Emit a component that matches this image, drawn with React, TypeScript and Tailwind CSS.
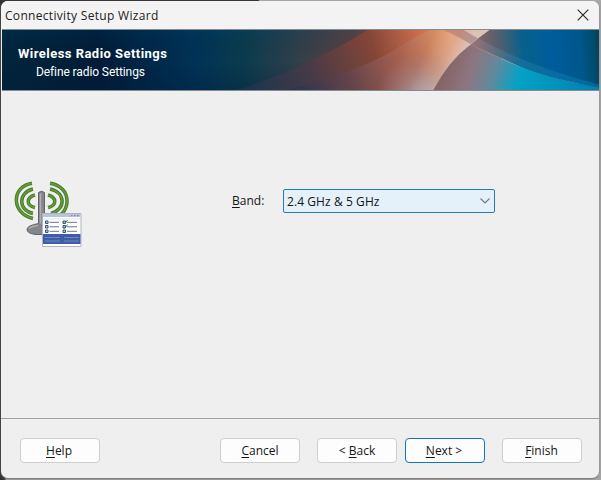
import type { ReactNode } from 'react';

const uiFont = "font-['Open_Sans','Noto_Sans',sans-serif]";

function BannerArt() {
  return (
    <svg className="absolute inset-0 h-full w-full" viewBox="2 29.5 596 61" preserveAspectRatio="none" aria-hidden="true">
      <defs>
        <linearGradient id="base" gradientUnits="userSpaceOnUse" x1="2" y1="0" x2="440" y2="0">
          <stop offset="0" stopColor="#01263c" />
          <stop offset=".22" stopColor="#011c38" />
          <stop offset=".44" stopColor="#003357" />
          <stop offset=".55" stopColor="#0a3c4e" />
          <stop offset=".67" stopColor="#30404a" />
          <stop offset=".8" stopColor="#5f4240" />
          <stop offset=".9" stopColor="#a3523f" />
          <stop offset="1" stopColor="#dc8055" />
        </linearGradient>
        <linearGradient id="shade" x1="0" y1="0" x2="0" y2="1">
          <stop offset="0" stopColor="#00406a" stopOpacity=".2" />
          <stop offset=".5" stopColor="#001830" stopOpacity="0" />
          <stop offset="1" stopColor="#001838" stopOpacity=".3" />
        </linearGradient>
        <linearGradient id="red" gradientUnits="userSpaceOnUse" x1="240" y1="90" x2="430" y2="30">
          <stop offset="0" stopColor="#16334f" />
          <stop offset=".35" stopColor="#453a47" />
          <stop offset=".7" stopColor="#854637" />
          <stop offset="1" stopColor="#dc7752" />
        </linearGradient>
        <linearGradient id="mauve" gradientUnits="userSpaceOnUse" x1="290" y1="90" x2="450" y2="35">
          <stop offset="0" stopColor="#26344a" />
          <stop offset=".35" stopColor="#64434a" />
          <stop offset=".68" stopColor="#a8614f" />
          <stop offset="1" stopColor="#e49a6d" />
        </linearGradient>
        <radialGradient id="haze" gradientUnits="userSpaceOnUse" cx="422" cy="98" r="46">
          <stop offset="0" stopColor="#9caabb" stopOpacity=".9" />
          <stop offset=".35" stopColor="#a19ba8" stopOpacity=".6" />
          <stop offset="1" stopColor="#a08088" stopOpacity="0" />
        </radialGradient>
        <linearGradient id="blue" gradientUnits="userSpaceOnUse" x1="470" y1="44" x2="598" y2="34">
          <stop offset="0" stopColor="#8d6967" />
          <stop offset=".2" stopColor="#5a5f6b" />
          <stop offset=".4" stopColor="#07618c" />
          <stop offset=".62" stopColor="#005c9b" />
          <stop offset=".85" stopColor="#00578b" />
          <stop offset="1" stopColor="#00445c" />
        </linearGradient>
        <linearGradient id="cyan" gradientUnits="userSpaceOnUse" x1="440" y1="62" x2="590" y2="110">
          <stop offset="0" stopColor="#84605f" />
          <stop offset=".2" stopColor="#8d7681" />
          <stop offset=".34" stopColor="#63899c" />
          <stop offset=".5" stopColor="#05a2c4" />
          <stop offset="1" stopColor="#0080b2" />
        </linearGradient>
        <linearGradient id="band" gradientUnits="userSpaceOnUse" x1="443" y1="30" x2="598" y2="88">
          <stop offset="0" stopColor="#bd7966" />
          <stop offset=".22" stopColor="#947781" />
          <stop offset=".5" stopColor="#1b75a0" />
          <stop offset="1" stopColor="#0079b0" />
        </linearGradient>
        <linearGradient id="glow" gradientUnits="userSpaceOnUse" x1="424" y1="53" x2="456" y2="68">
          <stop offset="0" stopColor="#efc5ad" stopOpacity="0" />
          <stop offset=".6" stopColor="#dfc5bd" stopOpacity=".35" />
          <stop offset="1" stopColor="#d8d2d6" stopOpacity=".7" />
        </linearGradient>
      </defs>
      <path fill="url(#base)" d="M2 29H500V91H2Z" />
      <path fill="url(#shade)" d="M2 29H440V91H2Z" />
      <path fill="url(#red)" d="M235 91Q310 66 368 29H500V91Z" />
      <path fill="url(#mauve)" d="M285 91Q361 72 401 45Q419 34 430 29H500V91Z" />
      <path fill="url(#haze)" d="M360 91V29H491Q450 56 432 91Z" />
      <path fill="url(#glow)" d="M380 91V29H491Q450 56 432 91Z" />
      <path fill="url(#blue)" d="M489 29Q478 37 470 44L535 74L598 89V29Z" />
      <path fill="url(#cyan)" d="M432 91Q448 60 470 44Q530 77 598 88V91Z" />
      <path fill="url(#band)" fillOpacity=".6" d="M441 29H462Q520 65 598 85V89Q530 77 470 44Q454 34 441 29Z" />
      <path fill="none" stroke="#d8dce0" strokeOpacity=".5" strokeWidth=".8" d="M432 91Q448 60 470 44Q480 35 489 29" />
    </svg>
  );
}

function RadioWaves() {
  return (
    <>
      <path d="M32 183.8C11 187 11 214 33 219" />
      <path d="M33 189.5C18 193 18 211 33 214" />
      <path d="M35 195.5C26 198 26 206 35 208" />
      <path d="M50 183.8C72 187 72 213 54 219" />
      <path d="M50 189.5C66 193 66 210 51 214" />
      <path d="M48 195.5C57 198 57 206 48 208" />
    </>
  );
}

function RadioIcon() {
  return (
    <svg className="h-[68px] w-[68px]" viewBox="14 180.5 68 68" aria-hidden="true">
      <g fill="none" stroke="#477c2a" strokeWidth="3.5">
        <RadioWaves />
      </g>
      <g fill="none" stroke="#679c3d" strokeWidth="1.5">
        <RadioWaves />
      </g>
      <path d="M38.5 193Q41.5 190.5 44.5 193V235H36Q27 234 27 230Q27 226 38.5 224Z" fill="#85868b" stroke="#626369" />
      <path d="M29 229Q32 226.5 38 226M40.5 194V224" fill="none" stroke="#adafb5" strokeWidth="1.5" />
      <path d="M42.5 214H81V247H42.5Z" fill="#fff" stroke="#aeb4c2" />
      <path d="M43 214.5H80.5V217.5H43Z" fill="#b7c3df" />
      <path d="M71 216.2H79" stroke="#6e7f9f" strokeDasharray="1.5 1.5" />
      <path d="M43 219.5H80" stroke="#dce0e5" />
      <path d="M43 234.5H80.5V244.5H43Z" fill="#3f5ca9" />
      <path d="M45 238H60M45 241.5H60M64 238H79M64 241.5H79" stroke="#7187c5" />
      <path d="M49.5 222.8H59M49.5 227.3H59M49.5 231.8H59M67 222.8H77M67 227.3H77M67 231.8H77" stroke="#67768d" />
      <g fill="#b8c9de" stroke="#34527e">
        <path d="M45.5 221.5H48V224H45.5ZM45.5 226H48V228.5H45.5ZM45.5 230.5H48V233H45.5Z" />
        <path d="M63 221.5H65.5V224H63ZM63 226H65.5V228.5H63ZM63 230.5H65.5V233H63Z" />
      </g>
      <path d="M63 223L65 224L67.5 220.5M63 227.5L65 228.5L67.5 225" fill="none" stroke="#407a55" />
    </svg>
  );
}

function WizardButton({ children, primary = false, className = '' }: { children: ReactNode; primary?: boolean; className?: string }) {
  return (
    <button className={`flex h-[25px] w-20 items-center justify-center rounded-[4px] border bg-[#fdfdfd] pt-px text-[12px] leading-4 text-[#151515] ${primary ? 'border-[#1474b8]' : 'border-[#cecece]'} ${className}`}>
      <span className="whitespace-pre">{children}</span>
    </button>
  );
}

function Key({ children }: { children: string }) {
  return <span className="underline decoration-1 underline-offset-2">{children}</span>;
}

export default function App() {
  return (
    <main className={`h-[480px] w-[601px] overflow-hidden bg-[linear-gradient(90deg,#353135_0px,#353135_258px,#aaa_260px,#aaa_100%)] pl-px pt-px ${uiFont}`}>
      <div className="h-[479px] w-[600px] bg-[linear-gradient(90deg,transparent_4px,#a5a5a5_5px)]">
        <section className="flex h-[477px] w-[598px] flex-col overflow-hidden rounded-[7px] bg-[#efefef] shadow-[0_1px_2px_#777]">
          <header className="flex h-[28px] shrink-0 items-center justify-between bg-[#f3f3f3] pl-1 pr-[10px]">
            <h1 className="pt-px text-[12px] leading-4 tracking-[0.31px] text-[#222]">Connectivity Setup Wizard</h1>
            <button aria-label="Close" className="text-[#252525]">
              <svg width="12" height="12" viewBox="0 0 12 12" fill="none" stroke="currentColor" strokeWidth="1.1"><path d="M.7.7L11.3 11.3M11.3.7L.7 11.3" /></svg>
            </button>
          </header>
          <div className="relative ml-px h-[62px] shrink-0 overflow-hidden border-y border-[#858b8f]">
            <BannerArt />
            <div className="relative pl-4 pt-[15px] text-white font-['Roboto',sans-serif]">
              <h2 className="text-[13px] font-bold leading-[17px] tracking-[0.46px]">Wireless Radio Settings</h2>
              <p className="pl-[18px] pt-px text-[12px] leading-[18px] tracking-[-0.1px]">Define radio Settings</p>
            </div>
          </div>
          <div className="flex min-h-0 flex-1 pl-[13px] pt-[89px]">
            <RadioIcon />
            <div className="mt-[9px] flex h-[24px] items-center pl-[150px]">
              <label className="w-[51px] text-[12px] leading-4 text-[#151515]"><Key>B</Key>and:</label>
              <button className="flex h-6 w-[212px] items-center justify-between rounded-[2px] border border-[#267bb6] bg-[#e4f0fa] pl-[3px] pr-1 text-[12px] leading-4 text-[#151515]">
                <span className="pt-px tracking-[0.08px]">2.4 GHz &amp; 5 GHz</span>
                <svg width="10" height="6" viewBox="0 0 10 6" fill="none" stroke="#777" strokeWidth="1.1"><path d="M.5.5L5 5L9.5.5" /></svg>
              </button>
            </div>
          </div>
          <footer className="flex h-[60px] shrink-0 border-t border-[#a1a1a1] pl-[19px] pt-[19px]">
            <WizardButton className="pr-[2px]"><Key>H</Key>elp</WizardButton>
            <WizardButton className="ml-[120px]"><Key>C</Key>ancel</WizardButton>
            <WizardButton className="ml-[17px]">{'< '}<Key>B</Key>ack</WizardButton>
            <WizardButton primary className="ml-[8px] pr-[2px]"><Key>N</Key>ext{' >'}</WizardButton>
            <WizardButton className="ml-[17px] pr-px"><Key>F</Key>inish</WizardButton>
          </footer>
        </section>
      </div>
    </main>
  );
}
